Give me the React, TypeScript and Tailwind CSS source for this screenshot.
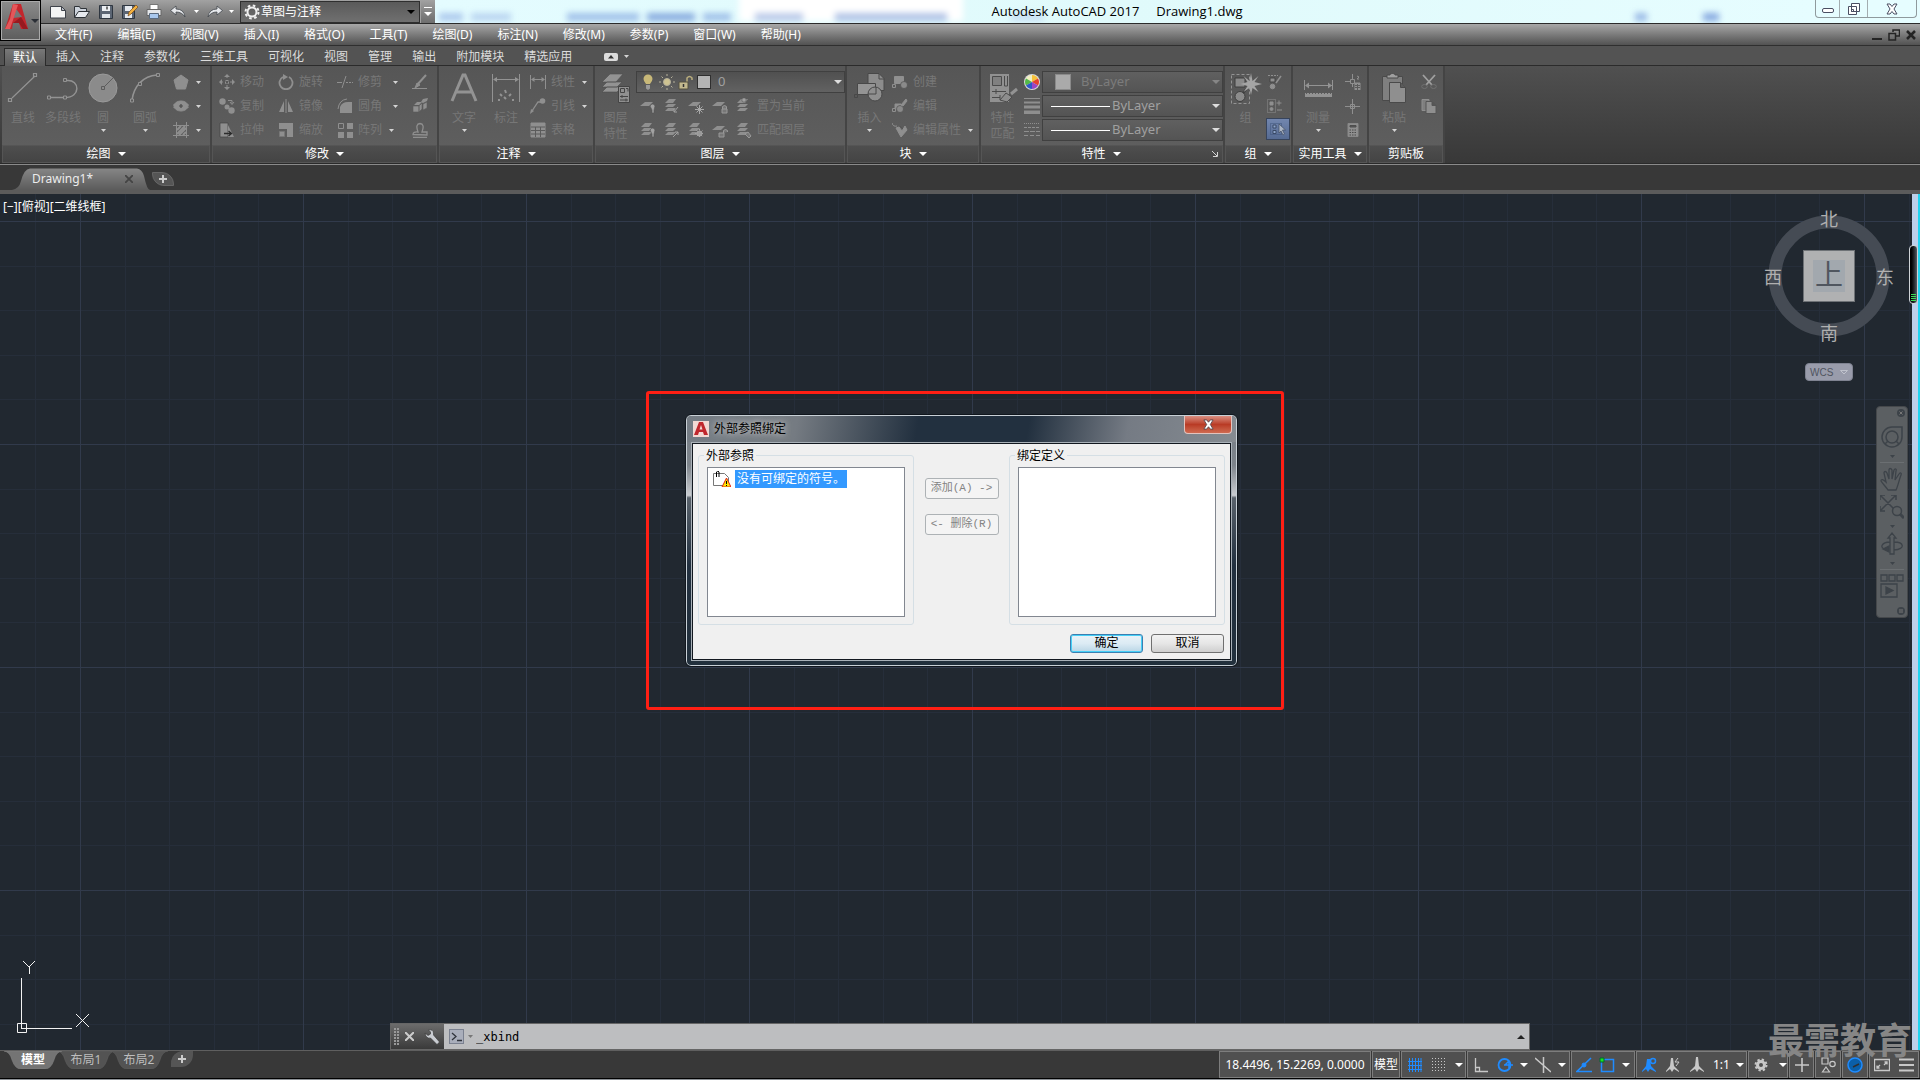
import type { ReactNode } from 'react';
import { clsx } from 'clsx';

const MENUS = ['文件(F)', '编辑(E)', '视图(V)', '插入(I)', '格式(O)', '工具(T)', '绘图(D)', '标注(N)', '修改(M)', '参数(P)', '窗口(W)', '帮助(H)'];
const TABS = ['插入', '注释', '参数化', '三维工具', '可视化', '视图', '管理', '输出', '附加模块', '精选应用'];

const Caret = ({ className = 'text-neutral-300' }: { className?: string }) => (
  <svg viewBox="0 0 5 3" className={clsx('h-[3px] w-[5px] shrink-0', className)} fill="currentColor">
    <path d="M0 0h5L2.5 3z" />
  </svg>
);

const BigCaret = ({ className = 'text-white' }: { className?: string }) => (
  <svg viewBox="0 0 8 4" className={clsx('h-1 w-2 shrink-0', className)} fill="currentColor">
    <path d="M0 0h8L4 4z" />
  </svg>
);

const Ic = ({ children, size = 16 }: { children: ReactNode; size?: 16 | 32 }) => (
  <svg
    viewBox={size === 16 ? '0 0 16 16' : '0 0 32 32'}
    className={clsx('shrink-0', size === 16 ? 'size-4' : 'size-8')}
    fill="none"
    stroke="currentColor"
    strokeWidth="1"
  >
    {children}
  </svg>
);

/* ---------- ribbon icons, 32px ---------- */
const LineIcon = () => (
  <Ic size={32}>
    <path d="M5 26 28 4M1.500 26.500h3v3h-3zM26.500 1.500h3v3h-3z" strokeWidth="1.200" />
  </Ic>
);
const PolylineIcon = () => (
  <Ic size={32}>
    <path d="M4 25.500h14c16 0 15-18 2-17" strokeWidth="1.500" />
    <path d="M.5 24h3v3h-3zM16.500 24h3v3h-3zM16.500 6.500h3v3h-3z" fill="#5b5b5b" />
  </Ic>
);
const CircleIcon = () => (
  <Ic size={32}>
    <circle cx="16" cy="16" r="14" fill="#8b8b8b" stroke="#9a9a9a" />
    <path d="m17 15 9-9" stroke="#5c5c5c" />
    <path d="M14.500 14.500h3v3h-3z" fill="#8b8b8b" stroke="#5c5c5c" />
  </Ic>
);
const ArcIcon = () => (
  <Ic size={32}>
    <path d="M3 28C5 14 14 4 28 3" strokeWidth="1.500" />
    <path d="M1.500 27h3v3h-3zM9.500 10.500h3v3h-3zM27.500 1.500h3v3h-3z" fill="#5b5b5b" />
  </Ic>
);
const TextIcon = () => (
  <Ic size={32}>
    <path d="M4 29 15 3h2l11 26M8 20h16" strokeWidth="3" />
  </Ic>
);
const DimIcon = () => (
  <Ic size={32}>
    <path d="M2.500 2v28M29.500 2v28M4 7.500h24" />
    <path d="m3 7.500 4-2.500v5zM29 7.500 25 5v5z" fill="currentColor" stroke="none" />
    <path d="m10 22 2 2m3-6 1 3m5 1-2 2M8 28h2m4-3 2 2m6 1h2" strokeWidth="2" />
  </Ic>
);
const Sheets = () => (
  <g fill="currentColor" stroke="none">
    <path d="m1 13 3-3h8l-3 3zM1 9l3-3h8L9 9zM1 5l4-4h7L9 5z" />
  </g>
);
const LayerPropsIcon = () => (
  <Ic size={32}>
    <g fill="currentColor" stroke="#4d4d4d" strokeWidth=".6">
      <path d="m2 20 5-5h15l-5 5zM2 15l5-5h15l-5 5zM2 10l8-8h13l-7 8z" />
    </g>
    <path d="M18.500 14.500h11v16h-11z" fill="#909090" stroke="#444" />
    <path d="M20.500 16.500h4v4h-4zM26 16.500h2v3M20 24.500h8M20 28h8M22 23v3M26 26.500v3" stroke="#444" />
  </Ic>
);
const InsertIcon = () => (
  <Ic size={32}>
    <path d="M14 1.500h11l5 5v12H14z" fill="#8c8c8c" stroke="#484848" />
    <path d="M3.500 11.500h18v11h-18z" fill="#949494" stroke="#484848" />
    <circle cx="21" cy="22" r="7" fill="#8f8f8f" stroke="#484848" />
    <path d="M14 22h8v-7M.5 22.500h3v3h-3zM25 2v5h5" stroke="#484848" />
  </Ic>
);
const MatchIcon = () => (
  <Ic size={32}>
    <path d="M3 2h19v28H3z" fill="#919191" stroke="none" />
    <path d="M5.500 4.500h9v9h-9z" stroke="#4b4b4b" fill="#808080" />
    <path d="M17.500 4v10h3V4M5 19.500h14M5 25.500h8M9 17v5M13 23v5" stroke="#4b4b4b" />
    <path d="m13 28 6-7 6 4-5 5z" fill="#8d8d8d" stroke="#4b4b4b" />
    <path d="m24 22 6-5" strokeWidth="3" />
  </Ic>
);
const GroupIcon = () => (
  <Ic size={32}>
    <path d="M1.500 2.500h18v29h-18z" strokeDasharray="3 2" />
    <path d="M5 6h10v9H5z" fill="#8b8b8b" stroke="#3f3f3f" />
    <circle cx="10" cy="24.500" r="5" fill="#8b8b8b" stroke="#3f3f3f" />
    <path d="m13 21 6-7" strokeWidth="2" stroke="#3f3f3f" />
    <path d="m21 1 1.500 8 6-5-4 6 7.500 2-7.500 2 4 6-6-4-1.500 7-1.500-7-6 4 4-6-7-2 7-2-4-6 6 5z" fill="#a5a5a5" stroke="none" />
  </Ic>
);
const MeasureIcon = () => (
  <Ic size={32}>
    <path d="M2.500 8v10M30.500 8v10M4 13.500h26" />
    <path d="m3 13.500 4-3v6zM30 13.500l-4-3v6z" fill="currentColor" stroke="none" />
    <path d="M3 21h27v4H3z" fill="currentColor" stroke="none" />
    <path d="M4 21.500h25" stroke="#5b5b5b" strokeDasharray="1 2" />
  </Ic>
);
const PasteIcon = () => (
  <Ic size={32}>
    <path d="M4.500 4.500h20v24h-20z" fill="#7f7f7f" stroke="#4a4a4a" />
    <path d="M9 6V3h3c0-2 5-2 5 0h3v3z" fill="#a0a0a0" stroke="#4a4a4a" />
    <path d="M11.500 10.500h11l5 5v15h-16z" fill="#8f8f8f" stroke="#4a4a4a" />
    <path d="M22.500 10.500v5h5" fill="#5b5b5b" stroke="#4a4a4a" />
  </Ic>
);

/* ---------- ribbon icons, 16px ---------- */
const PolygonIcon = () => <Ic><path d="m8 1 7 5-2.500 9h-9L1 6z" fill="currentColor" /></Ic>;
const EllipseIcon = () => (
  <Ic>
    <ellipse cx="8" cy="8" rx="7" ry="5" fill="currentColor" />
    <path d="M8 6v4M6 8h4" stroke="#4a4a4a" strokeWidth="1.200" />
    <path d="M1 6v4M15 6v4" strokeDasharray="2 1" />
  </Ic>
);
const HatchIcon = () => (
  <Ic>
    <path d="M0 3.500h16M0 13.500h16M3.500 0v16M13.500 0v16" />
    <path d="m4 8 4-4M4 12l8-8M6 13l7-7M10 13l3-3" strokeWidth="2" />
  </Ic>
);
const MoveIcon = () => (
  <Ic>
    <path d="M6.500 6.500h3v3h-3zM8 1v4M8 11v4M1 8h4M11 8h4" strokeDasharray="3 1" />
    <path d="m8 0 3 3H5zM8 16l3-3H5zM0 8l3-3v6zM16 8l-3-3v6z" fill="currentColor" stroke="none" />
  </Ic>
);
const RotateIcon = () => (
  <Ic>
    <path d="M11 3a6.500 6.500 0 1 1-6 0" strokeWidth="1.800" />
    <path d="m5 0 5 3-5 3z" fill="currentColor" stroke="none" />
  </Ic>
);
const TrimIcon = () => (
  <Ic>
    <path d="m5 14 4-12M0 8.500h5" />
    <path d="M9 8.500h7" strokeDasharray="2 1" />
  </Ic>
);
const EraseIcon = () => <Ic><path d="m5 11 9-10" strokeWidth="2" /><path d="m3 14 2-5 3 2zM0 14.500h15" fill="currentColor" /></Ic>;
const CopyIcon = () => (
  <Ic>
    <circle cx="3.500" cy="3.500" r="3.200" fill="currentColor" stroke="none" />
    <circle cx="8" cy="9" r="2.500" fill="currentColor" stroke="none" />
    <circle cx="12.500" cy="12.500" r="3.200" fill="currentColor" stroke="none" />
    <path d="M9 2.500h4v3M11 4l2 2.500L15 4" />
  </Ic>
);
const MirrorIcon = () => <Ic><path d="M6 3v11H1zM10 3v11h5z" fill="currentColor" stroke="none" /><path d="M8 1v14" /></Ic>;
const FilletIcon = () => <Ic><path d="M3 15V9q2-5 8-5h4v11z" fill="currentColor" stroke="none" /><path d="M1 11Q2 2 10 1" /></Ic>;
const ExplodeIcon = () => (
  <Ic>
    <path d="M1 8h6v6H1zM7 8l3-3v6l-3 3zM11 6l4-2v6l-4 2z" fill="currentColor" stroke="#5b5b5b" strokeWidth=".6" />
    <path d="m2 7 3-3h5L7 7zM9 4l2-3 5-1-1 3-4 2z" fill="currentColor" stroke="none" />
  </Ic>
);
const StretchIcon = () => (
  <Ic>
    <path d="M1 1h8v14H1z" fill="currentColor" stroke="#444" strokeWidth=".7" />
    <path d="m9 3 6 12H9z" fill="currentColor" stroke="none" />
    <path d="M5 11.500h7M9.500 9l3 2.500-3 2.500" stroke="#2c2c2c" strokeWidth="1.300" />
  </Ic>
);
const ScaleIcon = () => <Ic><path d="M1 1h14v14H9V7H1z" fill="currentColor" stroke="none" /><path d="M1.500 9.500h5v5h-5z" fill="currentColor" stroke="#777" /></Ic>;
const ArrayIcon = () => (
  <Ic>
    <path d="M1.500 1.500h5v5h-5z" />
    <path d="M10 1h6v6h-6zM1 10h6v6H1zM10 10h6v6h-6z" fill="currentColor" stroke="none" />
  </Ic>
);
const OffsetIcon = () => <Ic><path d="M1 15.500h14M1 12.500q0-3 5-2.500-3-8 2-8.500 5 .5 2 8.500h5v3z" strokeWidth="1.300" /></Ic>;
const LinearIcon = () => <Ic><path d="M.5 1v14M15.500 1v14M2 5.500h12" /><path d="m1 5.500 3.500-2.500v5zM15 5.500 11.500 3v5z" fill="currentColor" stroke="none" /></Ic>;
const LeaderIcon = () => <Ic><circle cx="12.500" cy="3" r="2.800" fill="currentColor" stroke="none" /><path d="M11 4H8l-6 9" strokeWidth="1.300" /><path d="m0 16 1-5 3 2z" fill="currentColor" stroke="none" /></Ic>;
const TableIcon = () => <Ic><path d="M1 1h14v14H1z" fill="currentColor" /><path d="M1 5h14M1 8.500h14M1 12h14M5.500 5v10M10.500 5v10" stroke="#5b5b5b" /></Ic>;

const LayerIcon = ({ kind }: { kind: string }) => (
  <Ic>
    {kind.startsWith('one') ? <path d="m0 8 5-4h8l-4 4z" fill="currentColor" stroke="none" /> : <Sheets />}
    {kind.endsWith('bulb') && <path d="M10 8q3-4 5 0l-1 4v3h-2v-3z" fill="#a2a2a2" stroke="#555" strokeWidth=".6" />}
    {kind.endsWith('arrow') && <path d="m14 9-4 5m0-3v3h3" stroke="#a2a2a2" />}
    {kind.endsWith('out') && <path d="m9 15 5-5m-3 0h3v3" stroke="#a2a2a2" />}
    {kind.endsWith('snow') && <path d="M11.500 7v9M7 11.500h9M8.500 8.500l6 6M14.500 8.500l-6 6" stroke="#a8a8a8" />}
    {kind.endsWith('sun') && (
      <g stroke="#a2a2a2">
        <circle cx="11.500" cy="11.500" r="2.500" fill="#999" />
        <path d="M11.500 7v9M7 11.500h9M8.500 8.500l6 6M14.500 8.500l-6 6" strokeDasharray="1.500 5" />
      </g>
    )}
    {kind.endsWith('lock') && <path d="M10 11h5v4h-5zM10.500 11V8.500q2-2 4 0V11" fill="#777" stroke="#999" />}
    {kind.endsWith('open') && <path d="M7 11h5v4H7zM11.500 11V8.500q2-2 4 0V10" fill="#777" stroke="#999" />}
    {kind.endsWith('dot') && <circle cx="8" cy="2" r="2.200" fill="#a0a0a0" stroke="#555" strokeWidth=".6" />}
    {kind.endsWith('brush') && <path d="m9 12 3-2 3 4-2 2z" fill="#777" stroke="#999" />}
  </Ic>
);
const BlockIcon = ({ kind }: { kind: 'new' | 'edit' }) => (
  <Ic>
    <path d={kind === 'new' ? 'M2.500 2.500h9v7h-9z' : 'M3 6h6v5H3z'} fill="#909090" />
    <circle cx={kind === 'new' ? 12 : 8} cy="11" r="3.500" fill="#8a8a8a" stroke="#505050" strokeWidth=".7" />
    <path d="M.5 10.500h3v3h-3z" fill="#5b5b5b" />
    {kind === 'edit' && <path d="m9 7 5-6 1 2-4 5z" fill="currentColor" />}
  </Ic>
);
const AttrIcon = () => (
  <Ic>
    <path d="M0 1q1 4 5 3" />
    <path d="M4 6l5 9 6-7-2-4-3 5-3-4z" fill="currentColor" />
    <path d="M8 4l3 3" stroke="#555" />
  </Ic>
);
const WheelIcon = () => (
  <Ic>
    <g stroke="none">
      <circle cx="8" cy="8" r="8" fill="#d9d9d9" />
      <path d="M8 8V1a7 7 0 0 0-6 3.500z" fill="#f2f0c0" />
      <path d="M8 8V1a7 7 0 0 1 6 3.500z" fill="#f6c23a" />
      <path d="m8 8 6-3.500a7 7 0 0 1 0 7z" fill="#e8402e" />
      <path d="M8 8 2 4.500a7 7 0 0 0 0 7z" fill="#54b948" />
      <path d="m8 8-6 3.500A7 7 0 0 0 8 15z" fill="#2f58c9" />
      <path d="m8 8 6 3.500A7 7 0 0 1 8 15z" fill="#9b45c4" />
    </g>
  </Ic>
);
const WeightIcon = () => <Ic><path d="M0 .5h16" /><path d="M0 4.500h16" strokeWidth="2" /><path d="M0 9h16" strokeWidth="3" /><path d="M0 14.500h16" strokeWidth="4" /></Ic>;
const LtypeIcon = () => <Ic><path d="M0 1.500h16" strokeDasharray="1 1" /><path d="M0 5.500h16" strokeDasharray="3 1" /><path d="M0 9.500h16" strokeDasharray="5 1" /><path d="M0 13.500h16" strokeDasharray="4 2" /></Ic>;
const UngroupIcon = () => <Ic><path d="M2 1.500h10" strokeDasharray="2 1" /><path d="M4 4h5v4H4z" fill="currentColor" stroke="#444" /><circle cx="6.500" cy="12.500" r="2.300" fill="currentColor" /><path d="m15 2-5 7" strokeWidth="1.500" /></Ic>;
const GroupEditIcon = () => <Ic><path d="M1.500 1.500h8v13h-8z" strokeDasharray="1 1" /><path d="M4 4h3v3H4z" fill="currentColor" /><circle cx="5.500" cy="11" r="1.500" fill="currentColor" /><path d="M10.500 5h5M13 2.500v5M11 12h5" /></Ic>;
const GroupSelIcon = () => <Ic><path d="M.5 2.500h11v11H.500z" strokeDasharray="1 1" stroke="#3f557a" /><path d="M3 4h3v3H3zM3 9.500h3v3H3z" fill="#8ea6cc" stroke="#3b4a66" /><path d="M9 3v9l2-2 2 4 1.500-1-2-4h3z" fill="#aab4c4" stroke="#444f63" strokeWidth=".7" /></Ic>;
const PointPickIcon = () => <Ic><path d="M0 7.500h5M7.500 0v5M7.500 10v3M5.500 5.500h4v4h-4z" /><path d="M10 9h5v7h-5z" fill="currentColor" /><path d="M10 11.500h5M10 13.500h5M12.500 10v6" stroke="#5b5b5b" /><path d="m12 2 2 1-2 2h2" /></Ic>;
const PointIcon = () => <Ic><path d="M0 8.500h15M7.500 1v15M5.500 6.500h4v4h-4z" /></Ic>;
const CalcIcon = () => <Ic><path d="M3 1.500h10v13H3z" fill="currentColor" stroke="#888" /><path d="M5 3.500h6v1.500H5z" fill="#5b5b5b" stroke="#4d4d4d" /><path d="M4.500 8h7M4.500 10.500h7M4.500 13h7" stroke="#4a4a4a" strokeDasharray="1.500 1" /></Ic>;
const CutIcon = () => <Ic><path d="M2 1 11 11M14 1 5 11" stroke="#a0a0a0" strokeWidth="1.800" /><ellipse cx="3.500" cy="12.500" rx="2.800" ry="2" stroke="#707070" /><ellipse cx="12.500" cy="12.500" rx="2.800" ry="2" stroke="#707070" /></Ic>;
const CopyDocIcon = () => <Ic><path d="M1 1.500h7v11H1z" fill="#7f7f7f" /><path d="M5 3.500h6l4 4v8H5z" fill="#8f8f8f" stroke="#555" /><path d="M11 3.500v4h4z" fill="#555" stroke="#555" /></Ic>;

/* ---------- ribbon parts ---------- */
const BigButton = ({ icon, label, label2, caret, className }: { icon: ReactNode; label: string; label2?: string; caret?: boolean; className: string }) => (
  <button className={clsx('flex flex-col items-center text-xs leading-4 text-[#777]', className)}>
    <span className="flex h-10 items-start pt-0.5 text-[#939393]">{icon}</span>
    <span className="whitespace-nowrap">{label}</span>
    {label2 && <span className="whitespace-nowrap">{label2}</span>}
    {caret && <span className="pt-[3px]"><Caret /></span>}
  </button>
);

const SmallButton = ({ icon, label, caret, wide }: { icon: ReactNode; label?: string; caret?: boolean; wide?: boolean }) => (
  <button className="flex h-6 items-center gap-[5px] text-xs text-[#777]">
    <span className="text-[#8f8f8f]">{icon}</span>
    {label && <span className="whitespace-nowrap">{label}</span>}
    {caret && <span className={wide ? 'pl-1.5' : 'pl-0.5'}><Caret /></span>}
  </button>
);

const Column = ({ children, className }: { children: ReactNode; className?: string }) => (
  <div className={clsx('flex flex-col items-start', className)}>{children}</div>
);

const Panel = ({ title, width, caret = true, launcher, children }: { title: string; width: string; caret?: boolean; launcher?: boolean; children: ReactNode }) => (
  <section className={clsx('flex shrink-0 flex-col border-r-2 border-[#444]', width)}>
    <div className="flex h-[79px] bg-linear-to-b from-[#565656] to-[#5e5e5e] pt-1">{children}</div>
    <button className="flex h-[18px] items-center justify-center gap-[7px] border border-[#555] bg-linear-to-b from-[#4e4e4e] to-[#444] text-xs text-white">
      {launcher && <span className="w-2" />}
      <span className={clsx(launcher && 'ml-auto')}>{title}</span>
      {caret && <BigCaret />}
      {launcher && (
        <svg viewBox="0 0 6 6" className="mr-1 ml-auto size-1.5 text-neutral-300" fill="none" stroke="currentColor">
          <path d="m0 0 5 5M5.500 1v4.500H1" />
        </svg>
      )}
    </button>
  </section>
);

const PropCombo = ({ label, disabled, children }: { label: string; disabled?: boolean; children: ReactNode }) => (
  <div className="relative flex h-[22px] items-center border border-[#404040] bg-linear-to-b from-[#606060] to-[#545454]">
    <span className="pointer-events-none absolute left-2 text-white">{children}</span>
    <select
      aria-label={label}
      disabled={disabled}
      className={clsx('h-full w-full appearance-none text-[13px] opacity-100 outline-none', disabled ? 'pl-[38px] text-[#7c7c7c]' : 'pl-[69px] text-[#a0a0a0]')}
    >
      <option>ByLayer</option>
    </select>
    <BigCaret className={clsx('pointer-events-none absolute right-0.5', disabled ? 'text-[#868686]' : 'text-[#ddd]')} />
  </div>
);

const Ribbon = () => (
  <div className="flex h-[98px] border-b border-[#2a2a2a] bg-linear-to-b from-[#505050] to-[#383838] pl-0.5">
    <Panel title="绘图" width="w-[210px]">
      <BigButton className="w-[42px]" icon={<LineIcon />} label="直线" />
      <BigButton className="w-[38px]" icon={<PolylineIcon />} label="多段线" />
      <BigButton className="w-[42px]" icon={<CircleIcon />} label="圆" caret />
      <BigButton className="w-[42px]" icon={<ArcIcon />} label="圆弧" caret />
      <Column className="pl-[7px]">
        <SmallButton icon={<PolygonIcon />} caret />
        <SmallButton icon={<EllipseIcon />} caret />
        <SmallButton icon={<HatchIcon />} caret />
      </Column>
    </Panel>
    <Panel title="修改" width="w-[227px]">
      <Column className="w-[66px] pl-[7px]">
        <SmallButton icon={<MoveIcon />} label="移动" />
        <SmallButton icon={<CopyIcon />} label="复制" />
        <SmallButton icon={<StretchIcon />} label="拉伸" />
      </Column>
      <Column className="w-[59px]">
        <SmallButton icon={<RotateIcon />} label="旋转" />
        <SmallButton icon={<MirrorIcon />} label="镜像" />
        <SmallButton icon={<ScaleIcon />} label="缩放" />
      </Column>
      <Column className="w-[75px]">
        <SmallButton icon={<TrimIcon />} label="修剪" caret wide />
        <SmallButton icon={<FilletIcon />} label="圆角" caret wide />
        <SmallButton icon={<ArrayIcon />} label="阵列" caret />
      </Column>
      <Column>
        <SmallButton icon={<EraseIcon />} />
        <SmallButton icon={<ExplodeIcon />} />
        <SmallButton icon={<OffsetIcon />} />
      </Column>
    </Panel>
    <Panel title="注释" width="w-[156px]">
      <BigButton className="ml-1 w-[42px]" icon={<TextIcon />} label="文字" caret />
      <BigButton className="w-[42px]" icon={<DimIcon />} label="标注" />
      <Column className="pl-[3px]">
        <SmallButton icon={<LinearIcon />} label="线性" caret />
        <SmallButton icon={<LeaderIcon />} label="引线" caret />
        <SmallButton icon={<TableIcon />} label="表格" />
      </Column>
    </Panel>
    <Panel title="图层" width="w-[252px]">
      <BigButton className="w-[41px]" icon={<LayerPropsIcon />} label="图层" label2="特性" />
      <div className="flex flex-1 flex-col">
        <div className="relative mt-px flex h-[22px] items-center border border-[#404040] bg-linear-to-b from-[#505050] to-[#626262]">
          <span className="pointer-events-none absolute left-[3px] flex items-center gap-[3px]">
            <svg viewBox="0 0 16 16" className="size-4">
              <path d="M3.500 5a4.500 4.500 0 0 1 9 0q0 2-2.500 5H6Q3.500 7 3.500 5z" fill="#c8b878" />
              <path d="M6 11h4v3.500L8 16l-2-1.500z" fill="#9a9a9a" />
            </svg>
            <svg viewBox="0 0 16 16" className="size-4" stroke="#b5b09a" fill="#cfc391">
              <circle cx="8" cy="8" r="3.500" />
              <path d="M8 0v2M8 14v2M0 8h2M14 8h2M2.500 2.500l1.500 1.500M12 12l1.500 1.500M13.500 2.500 12 4M4 12l-1.500 1.500" />
            </svg>
            <svg viewBox="0 0 16 16" className="size-4" fill="none" stroke="#b9ad7d" strokeWidth="1.500">
              <path d="M9 8V4q2.500-3 5 0v2" />
              <path d="M1 8h9v7H1z" fill="#c3b98e" stroke="#55513f" strokeWidth="1" />
              <path d="M5.500 10v3" stroke="#333" />
            </svg>
            <span className="size-[14px] border border-[#2f2f2f] bg-[#b4b4b4]" />
          </span>
          <select aria-label="图层" className="h-full w-full appearance-none pl-[81px] text-[13px] text-[#a0a0a0] outline-none">
            <option>0</option>
          </select>
          <BigCaret className="pointer-events-none absolute right-0.5 text-[#ddd]" />
        </div>
        <div className="mt-px flex h-6 items-center gap-2 pl-1 text-[#8f8f8f]">
          <LayerIcon kind="one-bulb" />
          <LayerIcon kind="arrow" />
          <LayerIcon kind="one-snow" />
          <LayerIcon kind="one-lock" />
          <SmallButton icon={<LayerIcon kind="dot" />} label="置为当前" />
        </div>
        <div className="flex h-6 items-center gap-2 pl-1 text-[#8f8f8f]">
          <LayerIcon kind="bulb" />
          <LayerIcon kind="out" />
          <LayerIcon kind="sun" />
          <LayerIcon kind="one-open" />
          <SmallButton icon={<LayerIcon kind="brush" />} label="匹配图层" />
        </div>
      </div>
    </Panel>
    <Panel title="块" width="w-[134px]">
      <BigButton className="w-[45px]" icon={<InsertIcon />} label="插入" caret />
      <Column>
        <SmallButton icon={<BlockIcon kind="new" />} label="创建" />
        <SmallButton icon={<BlockIcon kind="edit" />} label="编辑" />
        <SmallButton icon={<AttrIcon />} label="编辑属性" caret />
      </Column>
    </Panel>
    <Panel title="特性" width="w-[244px]" launcher>
      <BigButton className="w-[43px]" icon={<MatchIcon />} label="特性" label2="匹配" />
      <Column className="w-[18px] text-[#9a9a9a]">
        <SmallButton icon={<WheelIcon />} />
        <SmallButton icon={<WeightIcon />} />
        <SmallButton icon={<LtypeIcon />} />
      </Column>
      <div className="flex flex-1 flex-col gap-0.5 pt-px">
        <PropCombo label="对象颜色" disabled>
          <span className="ml-1 block size-4 border border-[#8a8a8a] bg-[#aaa]" />
        </PropCombo>
        <PropCombo label="线宽">
          <span className="block h-px w-[59px] bg-white" />
        </PropCombo>
        <PropCombo label="线型">
          <span className="block h-px w-[59px] bg-white" />
        </PropCombo>
      </div>
    </Panel>
    <Panel title="组" width="w-[68px]">
      <BigButton className="w-[41px]" icon={<GroupIcon />} label="组" />
      <Column className="items-center">
        <SmallButton icon={<UngroupIcon />} />
        <SmallButton icon={<GroupEditIcon />} />
        <button aria-label="启用组选择" className="flex h-[22px] w-6 items-center justify-center border border-[#37445c] bg-linear-to-b from-[#7286ae] to-[#566b93]">
          <GroupSelIcon />
        </button>
      </Column>
    </Panel>
    <Panel title="实用工具" width="w-[76px]">
      <BigButton className="w-[50px]" icon={<MeasureIcon />} label="测量" caret />
      <Column className="pl-0.5">
        <SmallButton icon={<PointPickIcon />} />
        <SmallButton icon={<PointIcon />} />
        <SmallButton icon={<CalcIcon />} />
      </Column>
    </Panel>
    <Panel title="剪贴板" width="w-[76px]" caret={false}>
      <BigButton className="w-[50px]" icon={<PasteIcon />} label="粘贴" caret />
      <Column className="pl-0.5">
        <SmallButton icon={<CutIcon />} />
        <SmallButton icon={<CopyDocIcon />} />
      </Column>
    </Panel>
  </div>
);

/* ---------- window header ---------- */
const QuickAccess = () => (
  <div className="flex h-full w-[435px] shrink-0 items-center bg-linear-to-b from-[#a2a2a2] via-[#858585] to-[#6e6e6e] pl-[50px]">
    <div className="flex items-center gap-2">
      <svg viewBox="0 0 16 16" className="size-4"><path d="M.5 2.500h11l4 4v7.500H.500z" fill="#f4f4f4" stroke="#3f434a" /><path d="M11.500 2.500v4h4z" fill="#b9bec8" stroke="#3f434a" /></svg>
      <svg viewBox="0 0 16 16" className="size-4"><path d="M.5 13.500v-11h5l1 2h6v3" fill="#cdd3dc" stroke="#2f3338" /><path d="m.5 13.500 4-6h11l-4 6z" fill="#e7eaef" stroke="#2f3338" /></svg>
      <svg viewBox="0 0 16 16" className="size-4"><path d="M1.500 1.500h13v13h-13z" fill="#5b6573" stroke="#2e3640" /><path d="M4 2h8v5H4z" fill="#eceff3" /><path d="M4 10h8v4H4z" fill="#dfe4ea" /><path d="M9 2.500v3" stroke="#444" strokeWidth="1.500" /></svg>
      <svg viewBox="0 0 16 16" className="size-4"><path d="M.5 1.500h12v13H.500z" fill="#5b6573" stroke="#2e3640" /><path d="M3 2h7v5H3zM3 10h7v4H3z" fill="#e6eaef" /><path d="m6 12 1-4 7-7 2 2-7 7z" fill="#f3b13f" stroke="#7a4a1a" strokeWidth=".7" /></svg>
      <svg viewBox="0 0 16 16" className="size-4"><path d="M4 5V.500h8V5" fill="#fff" stroke="#777" /><path d="M1 5.500h14v6H1z" fill="#e5e7ea" stroke="#666" /><path d="M3.500 9.500h9v5h-9z" fill="#a9c8ee" stroke="#5b6b80" /></svg>
      <svg viewBox="0 0 16 16" className="size-4"><path d="M6 2v3q8 0 9 8-3-5-9-5v3L.500 6.500z" fill="#e6e8eb" stroke="#41464c" strokeWidth=".8" /></svg>
    </div>
    <Caret className="mx-2 text-white" />
    <svg viewBox="0 0 16 16" className="size-4 shrink-0"><path d="M10 2v3q-8 0-9 8 3-5 9-5v3l5.500-4.500z" fill="#e6e8eb" stroke="#41464c" strokeWidth=".8" /></svg>
    <Caret className="mx-[6px] text-white" />
    <div className="relative flex h-[22px] w-[180px] shrink-0 items-center border border-[#2f2f2f] bg-linear-to-b from-[#5a5a5a] to-[#707070]">
      <svg viewBox="0 0 16 16" className="pointer-events-none absolute left-[3px] size-4" fill="none" stroke="#f0f0f0">
        <circle cx="8" cy="8" r="4.500" strokeWidth="2" />
        <circle cx="8" cy="8" r="6.500" strokeWidth="2" strokeDasharray="2.600 2.505" />
      </svg>
      <select aria-label="工作空间" className="h-full w-full appearance-none pl-5 text-xs text-white outline-none">
        <option>草图与注释</option>
      </select>
      <BigCaret className="pointer-events-none absolute right-1" />
    </div>
    <button aria-label="自定义快速访问工具栏" className="flex h-full flex-1 flex-col items-center justify-center gap-1 border-l border-neutral-400">
      <span className="h-px w-2 bg-white" />
      <BigCaret />
    </button>
  </div>
);

const TitleBar = () => (
  <div className="flex h-6 border-b border-[#2b2b2b]">
    <QuickAccess />
    <div className="relative flex flex-1 items-center justify-center overflow-hidden bg-linear-to-r from-[#e4fcff] via-[#e0fafb] to-[#e6fdff]">
      {/* desktop content seen through the glass frame */}
      <div className="absolute inset-0 flex items-end gap-2 pb-0.5 pl-1 blur-[3px]">
        <span className="h-2 w-6 bg-[#9fbde8]/80" />
        <span className="mr-12 h-2 w-10 bg-[#9fbde8]/60" />
        <span className="h-2 w-18 bg-[#8fb2e4]/80" />
        <span className="h-2 w-12 bg-[#7ea3dc]/90" />
        <span className="h-2 w-7 bg-[#8fb2e4]/80" />
        <span className="flex h-10 w-56 shrink-0 items-end justify-around bg-white">
          <span className="h-2 w-12 bg-[#9fb4e0]/70" />
          <span className="h-2 w-28 bg-[#9fb4e0]/80" />
        </span>
        <span className="ml-10 h-2 w-8 bg-[#b7cdf0]/60" />
        <span className="mr-12 ml-auto h-2 w-3 bg-[#86a8e0]/80" />
        <span className="mr-24 h-2 w-4 bg-[#86a8e0]" />
      </div>
      <span className="relative pr-4 font-['Open_Sans',sans-serif] text-[13px] whitespace-pre text-black">{'Autodesk AutoCAD 2017     Drawing1.dwg'}</span>
    </div>
    <div className="w-[105px] bg-[#e6fdff]">
      <div className="flex h-[18px] w-[102px] rounded-b border border-t-0 border-[#8f9a9d] text-[#4a4f63]">
        <button aria-label="最小化" className="flex flex-1 items-end justify-center border-r border-[#a3adb0] pb-1">
          <span className="h-[5px] w-3 rounded-xs border border-current bg-white" />
        </button>
        <button aria-label="还原" className="flex w-7 items-center justify-center border-r border-[#a3adb0]">
          <svg viewBox="0 0 12 12" className="size-3" fill="#fff" stroke="currentColor"><path d="M3.500.5h8v8h-8zM.5 3.500h8v8h-8zM3.500 6.500h2v2h-2z" /></svg>
        </button>
        <button aria-label="关闭" className="flex w-12 items-center justify-center">
          <svg viewBox="0 0 12 12" className="size-3" strokeLinejoin="round"><path d="M1 1h3l2 2.500L8 1h3L8 6l3 5H8L6 8.500 4 11H1l3-5z" fill="#fff" stroke="currentColor" /></svg>
        </button>
      </div>
    </div>
  </div>
);

const MenuBar = () => (
  <div className="flex h-[22px] items-center justify-between border-b border-[#2f2f2f] bg-linear-to-b from-[#a8a8a8] to-[#525252] pr-1 pl-[55px]">
    <nav className="flex gap-[25px] text-xs text-white">
      {MENUS.map((m) => <button key={m} className="whitespace-nowrap">{m}</button>)}
    </nav>
    <div className="flex items-center gap-1.5 text-[#242424]">
      <button aria-label="最小化图形" className="flex h-2.5 items-end"><span className="h-0.5 w-2.5 bg-current" /></button>
      <button aria-label="还原图形"><svg viewBox="0 0 12 12" className="size-3" fill="none" stroke="currentColor" strokeWidth="1.500"><path d="M5 3V1h6.500v6H8M1 4.500h6.500V11H1z" /></svg></button>
      <button aria-label="关闭图形"><svg viewBox="0 0 10 10" className="size-2.5" stroke="currentColor" strokeWidth="2.500"><path d="m1 1 8 8M9 1 1 9" /></svg></button>
    </div>
  </div>
);

const RibbonTabs = () => (
  <div className="flex h-5 items-center border-b border-[#2b2b2b] bg-[#535353] pt-0.5 pl-1 text-xs text-[#dcdcdc]">
    <button className="-mb-px h-[18px] self-end border border-b-0 border-[#2b2b2b] bg-linear-to-b from-[#787878] to-[#5c5c5c] px-2 text-white">默认</button>
    {TABS.map((t) => <button key={t} className="px-2.5 whitespace-nowrap">{t}</button>)}
    <button aria-label="最小化功能区" className="ml-[22px] flex items-center gap-1.5">
      <svg viewBox="0 0 14 8" className="h-2 w-3.5"><rect width="14" height="8" rx="2" fill="#dcdcdc" /><path d="M7 2 10 5.500H4z" fill="#333" /></svg>
      <Caret />
    </button>
  </div>
);

const FileTabs = () => (
  <div className="flex h-[30px] items-end border-t border-[#8a8a8a] border-b-4 border-b-[#5b5b5b] bg-[#383838] pl-3">
    <div className="relative flex h-[22px] w-[138px] items-center justify-between pr-[17px] pl-5">
      <svg viewBox="0 0 138 22" preserveAspectRatio="none" className="absolute inset-0 h-full w-full">
        <defs>
          <linearGradient id="ftab" x1="0" y1="0" x2="0" y2="1"><stop offset="0" stopColor="#868686" /><stop offset="1" stopColor="#5b5b5b" /></linearGradient>
        </defs>
        <path d="M0 22Q7 21 9 13 12 1 18 .5H125Q130 1 132 8 135 22 138 22Z" fill="url(#ftab)" />
      </svg>
      <span className="relative text-xs text-[#ececec]">Drawing1*</span>
      <button aria-label="关闭标签" className="relative"><svg viewBox="0 0 8 8" className="size-2" stroke="#444" strokeWidth="1.800"><path d="m0 0 8 8M8 0 0 8" /></svg></button>
    </div>
    <button aria-label="新图形" className="mb-1 ml-0.5 flex h-3.5 w-[22px] items-center justify-center rounded-tr-xl rounded-bl-xl border border-[#666] bg-[#555]">
      <svg viewBox="0 0 8 8" className="size-2" stroke="#ccc" strokeWidth="2"><path d="M0 4h8M4 0v8" /></svg>
    </button>
  </div>
);

/* ---------- drawing area ---------- */
const Grid = () => (
  <svg className="absolute inset-0 h-full w-full" fill="none">
    <defs>
      <pattern id="grid" x="80" y="27" width="223" height="223" patternUnits="userSpaceOnUse">
        <path d="M45.500 0v223M89.500 0v223M134.500 0v223M178.500 0v223M0 45.500h223M0 89.500h223M0 134.500h223M0 178.500h223" stroke="#262e3a" />
        <path d="M.5 0v223M0 .5h223" stroke="#313a4b" />
      </pattern>
    </defs>
    <rect width="100%" height="100%" fill="url(#grid)" />
  </svg>
);

const ViewCube = () => (
  <div className="absolute top-[11px] right-[18px] flex flex-col items-center gap-5">
    <div className="relative grid h-[138px] w-[130px] grid-cols-3 grid-rows-3 place-items-center font-['Liberation_Serif','Noto_Sans_CJK_SC',serif] text-[18px] leading-none text-[#b0b0b0]">
      <svg viewBox="0 0 130 138" className="absolute inset-0 size-full" fill="none"><circle cx="65" cy="71" r="54" stroke="#454b54" strokeWidth="13" /></svg>
      <span className="relative col-start-2 row-start-1 self-start pt-1.5">北</span>
      <span className="relative col-start-1 row-start-2 justify-self-start pt-2">西</span>
      <span className="relative col-start-2 row-start-2 mt-1 grid size-[52px] place-items-center border border-[#6e7276] bg-[#b0b1b2]">
        <span className="grid size-8 place-items-center bg-[#a2a8ae] text-[28px] leading-none text-[#50565f]">上</span>
      </span>
      <span className="relative col-start-3 row-start-2 justify-self-end pt-2">东</span>
      <span className="relative col-start-2 row-start-3 self-end">南</span>
    </div>
    <button className="flex h-[18px] w-12 items-center justify-between rounded border border-[#7f8391] bg-[#999cab] px-1 font-['Liberation_Sans',sans-serif] text-[10px] text-[#50545f]">
      WCS
      <svg viewBox="0 0 8 5" className="h-[5px] w-2" fill="none" stroke="#bfc2cc"><path d="M.5.5h7L4 4z" /></svg>
    </button>
  </div>
);

const NavBar = () => (
  <div className="absolute top-[212px] right-1 flex h-[212px] w-8 flex-col items-center rounded border border-[#45484b] bg-[#5b5f62] text-[#3d4349]">
    <svg viewBox="0 0 8 8" className="mt-0.5 mr-0.5 size-2 self-end" fill="currentColor"><circle cx="4" cy="4" r="4" /><path d="m2.500 2.500 3 3m0-3-3 3" stroke="#777" /></svg>
    <svg viewBox="0 0 24 24" className="mt-2 size-6" fill="none" stroke="currentColor" strokeWidth="1.500"><path d="M12 2h10v10a10 10 0 1 1-10-10z" /><circle cx="12" cy="12" r="6" /><path d="m5 19 3-3m8 0 3 3" /></svg>
    <Caret className="mt-1.5 text-current" />
    <span className="mt-1 h-px w-6 bg-[#6b6f72]" />
    <svg viewBox="0 0 24 24" className="mt-1 size-6" fill="none" stroke="currentColor" strokeWidth="1.300"><path d="M8 23c-2-3-5-6-7-9 0-2 2-2 5 1L4 6c0-2 2-2 3 0l2 6V3c0-2 2-2 3 0v9l2-9c1-2 3-1 2 1l-1 9 4-6c1-2 3-1 2 1-2 5-3 11-5 15z" /></svg>
    <svg viewBox="0 0 24 24" className="mt-1 size-6" fill="none" stroke="currentColor" strokeWidth="1.500"><path d="m1 1 15 15M15 1 1 15M0 5V0h5M11 0h5v5M0 11v5h5" /><circle cx="17" cy="16" r="4.500" fill="#5b5f62" /><path d="m20 19 4 4" strokeWidth="3" /></svg>
    <Caret className="mt-1.5 text-current" />
    <svg viewBox="0 0 24 24" className="mt-1 size-6" fill="none" stroke="currentColor" strokeWidth="1.300"><path d="M10 22V6H8l4-5 4 5h-2v16zM10 10c-8 0-12 6-3 8M14 10c10 0 12 7 0 8" /><path d="m3 17 6-3v6z" fill="currentColor" /></svg>
    <Caret className="mt-1.5 text-current" />
    <span className="mt-1 h-px w-6 bg-[#6b6f72]" />
    <svg viewBox="0 0 24 24" className="mt-1 size-6" fill="none" stroke="currentColor" strokeWidth="1.300"><path d="M1 1h6v6H1zM9 1h6v6H9zM17 1h6v6h-6zM1 10h16v13H1z" /><path d="m6 13 7 3.500L6 20z" fill="currentColor" /></svg>
    <svg viewBox="0 0 8 8" className="mt-auto mr-0.5 mb-0.5 size-2 self-end" fill="currentColor"><circle cx="4" cy="4" r="4" /><path d="M2 3h4M2 5h4" stroke="#777" /></svg>
  </div>
);

const UcsIcon = () => (
  <svg viewBox="0 0 76 76" className="absolute bottom-3.5 left-4 size-[76px]" fill="none" stroke="#f2f2f2">
    <path d="M5.500 68V18M5 68.500h51M1.500 63.500h9v9h-9z" />
    <path d="m7 1 6 6 6-6M13.500 7v7M60 54l13 13M73 54 60 67" />
  </svg>
);

const CommandLine = () => (
  <div className="absolute right-[382px] bottom-0 left-[390px] flex h-[27px] border border-[#666]">
    <div className="flex w-[53px] shrink-0 items-center gap-1.5 bg-linear-to-b from-[#6c6c6c] to-[#3a3a3a] pl-[3px]">
      <svg viewBox="0 0 5 18" className="h-[18px] w-[5px]" stroke="#999" strokeWidth="2" strokeDasharray="2 1"><path d="M1 0v18M4 0v18" /></svg>
      <svg viewBox="0 0 9 9" className="size-[9px]" stroke="#ccc" strokeWidth="2"><path d="m0 0 9 9M9 0 0 9" /></svg>
      <svg viewBox="0 0 16 16" className="ml-1 size-4"><path d="M1 4 4 6.500 6.500 5V3L4.500 1Q9 0 9.500 4v2l6 7-2.500 2.500-6.500-6.500Q2 10 1 4z" fill="#c9ccd1" stroke="#333" strokeWidth=".6" /></svg>
    </div>
    <label className="flex flex-1 items-center bg-[#bdbec0] pr-1 pl-[5px]">
      <span className="flex size-[15px] items-center border border-[#7b8190] bg-[#a9aebb]">
        <svg viewBox="0 0 13 13" className="size-[13px]" fill="none" stroke="#30343c"><path d="m2 3 4 3.500L2 10M7 10.500h5" strokeWidth="1.300" /></svg>
      </span>
      <Caret className="mr-[3px] ml-1 text-[#777]" />
      <input
        aria-label="命令"
        defaultValue="_xbind"
        className="flex-1 bg-transparent font-['DejaVu_Sans_Mono',monospace] text-[12px] text-black outline-none"
      />
      <svg viewBox="0 0 8 4" className="h-1 w-2"><path d="M0 4h8L4 0z" fill="#222" /></svg>
    </label>
  </div>
);

/* ---------- dialog ---------- */
const GroupBox = ({ title, children }: { title: string; children?: ReactNode }) => (
  <fieldset className="h-[178px] w-[216px] rounded-[3px] border border-[#d5dfe5] px-2 pb-1.5">
    <legend className="-ml-[3px] px-0.5 text-xs leading-[18px]">{title}</legend>
    <ul className="mt-0.5 h-[150px] w-full border border-[#828790] bg-white p-px text-xs">{children}</ul>
  </fieldset>
);

const XBindDialog = () => (
  <div
    role="dialog"
    aria-label="外部参照绑定"
    className="flex h-[253px] w-[553px] flex-col rounded-md border border-[#10161d] bg-[linear-gradient(#757d85,#7d848b_20%,#c9ccd0_32%,#59626b_33%,#22303f_60%,#22303c)] text-black shadow-[inset_0_0_0_1px_#c8d0d6]"
  >
    <div className="m-px flex h-[26px] shrink-0 items-center rounded-t bg-[linear-gradient(100deg,#757d85,#757b82_20%,#22303f_42%,#22303f_62%,#757b84_80%,#858b91)] pl-1.5">
      <span className="grid size-4 place-items-center bg-[#f3d9d4]">
        <svg viewBox="0 0 16 16" className="size-4"><path d="M6 1h4l5 13h-4l-1-3H6l-1 3H1zM8 4 6.500 8.500h3z" fill="#c0272d" /></svg>
      </span>
      <span className="pl-[5px] text-xs [text-shadow:0_0_6px_#ccc,0_0_8px_#bbb]">外部参照绑定</span>
      <button aria-label="关闭" className="mr-1 ml-auto flex h-[18px] w-[48px] items-center justify-center self-start rounded-b border border-t-0 border-[#e3c3bd] bg-linear-to-b from-[#d98d80] via-[#b93b25] via-50% to-[#cf6a50]">
        <svg viewBox="0 0 12 12" className="size-[11px]"><path d="M1 1h3l2 2.500L8 1h3L8 6l3 5H8L6 8.500 4 11H1l3-5z" fill="#fff" stroke="#5b4a50" /></svg>
      </button>
    </div>
    <div className="mx-[6px] mb-[6px] flex flex-1 flex-col border border-[#12181f] bg-[#f0f0f0] px-[5px] outline outline-[#a9b1b8]">
      <div className="flex justify-between pt-[3px]">
        <GroupBox title="外部参照">
          <li className="flex h-[20px] items-center gap-1 pl-1">
            <svg viewBox="0 0 18 16" className="h-4 w-[18px]">
              <path d="M.5 2.500h11l4 4v8H.500z" fill="#fff" stroke="#777" />
              <path d="M3.500 6V1q1.500-2 2.500 0v5" fill="none" stroke="#000" />
              <path d="m13.500 7 4.500 9H9z" fill="#ffe600" stroke="#e0201a" />
              <path d="M13.500 10v3M13.500 14v1" stroke="#000" />
            </svg>
            <span className="h-[18px] bg-[#3399ff] pr-0.5 pl-0.5 leading-[18px] text-white">没有可绑定的符号。</span>
          </li>
        </GroupBox>
        <div className="flex flex-col gap-[15px] pt-[31px] font-['Liberation_Mono','Noto_Sans_CJK_SC',monospace] text-[11px] text-[#838383]">
          <button disabled className="h-[21px] w-[74px] rounded-[3px] border border-[#adb2b5] bg-[#f4f4f4] whitespace-nowrap">{'添加(A) ->'}</button>
          <button disabled className="h-[21px] w-[74px] rounded-[3px] border border-[#adb2b5] bg-[#f4f4f4] whitespace-nowrap">{'<- 删除(R)'}</button>
        </div>
        <GroupBox title="绑定定义" />
      </div>
      <div className="flex justify-end gap-2 pt-[9px] pr-px text-xs">
        <button className="h-[19px] w-[73px] rounded-[3px] border border-[#3c7fb1] bg-linear-to-b from-[#eaf3f8] via-[#dcebf4] to-[#b9d6e6] leading-4 shadow-[inset_0_0_0_1px_#46d0f7]">确定</button>
        <button className="h-[19px] w-[73px] rounded-[3px] border border-[#707070] bg-linear-to-b from-[#f2f2f2] via-[#e6e6e6] to-[#cfcfcf] leading-4">取消</button>
      </div>
    </div>
  </div>
);

/* ---------- bottom bar ---------- */
const LayoutTab = ({ label, active }: { label: string; active?: boolean }) => (
  <button className={clsx('relative -mr-[5px] flex h-[18px] w-[58px] items-center justify-center text-xs', active ? 'z-10 font-bold text-white' : 'text-[#bdbdbd]')}>
    <svg viewBox="0 0 58 18" className="absolute inset-0 h-[18px] w-[58px]">
      <path d="M0 0q6 1 8 9 3 9 9 9h24q6 0 9-9 2-8 8-9z" fill={active ? '#747474' : '#535353'} stroke={active ? '#858585' : '#606060'} strokeWidth=".5" />
    </svg>
    <span className="relative">{label}</span>
  </button>
);

const Cell = ({ children, className }: { children: ReactNode; className: string }) => (
  <div className={clsx('flex h-full items-center border border-[#7d7d7d] bg-[#505050] text-[#c8c8c8]', className)}>{children}</div>
);

const StatusBar = () => (
  <footer className="flex h-7 border-t border-[#5f5f5f] bg-[#383838]">
    <div className="flex items-start pl-1">
      <LayoutTab label="模型" active />
      <LayoutTab label="布局1" />
      <LayoutTab label="布局2" />
      <button aria-label="新建布局" className="ml-2 flex h-4 w-[22px] items-center justify-center rounded-tl-xl rounded-br-xl bg-[#555]">
        <svg viewBox="0 0 8 8" className="size-2" stroke="#ccc" strokeWidth="2"><path d="M0 4h8M4 0v8" /></svg>
      </button>
    </div>
    <div className="ml-auto flex gap-px pr-px">
      <Cell className="w-[152px] justify-center text-xs whitespace-nowrap text-white">18.4496, 15.2269, 0.0000</Cell>
      <Cell className="w-[28px] justify-center text-xs text-white">模型</Cell>
      <Cell className="w-[65px] gap-2 pl-[5px]">
        <span className="text-[#1f8bff]"><Ic><path d="M2.500 1v14M5.500 1v14M8.500 1v14M11.500 1v14M14 1v14M1 4.500h14M1 8.500h14M1 12.500h14" /></Ic></span>
        <Ic><path d="M1 1.500h15M1 4.500h15M1 7.500h15M1 10.500h15M1 13.500h15" strokeDasharray="1 2" /></Ic>
        <BigCaret />
      </Cell>
      <Cell className="w-[103px] gap-[7px] pl-1.5">
        <Ic><path d="M1.500 1v13.500H14M1.500 10.500h4v4" strokeWidth="1.300" /></Ic>
        <span className="text-[#1f8bff]"><Ic><circle cx="7.500" cy="8" r="6" strokeWidth="1.800" /><path d="M7 8h9M8 8l4-4M12 5v6" strokeWidth="1.500" /></Ic></span>
        <BigCaret />
        <Ic><path d="m0 1 16 14M8.500 0v16" strokeWidth="1.500" /></Ic>
        <BigCaret />
      </Cell>
      <Cell className="w-[64px] gap-[7px] pl-1">
        <span className="text-[#1f8bff]"><Ic><path d="M15 1 1 14.500h15" strokeWidth="1.600" /><circle cx="8" cy="8" r="2" fill="currentColor" /></Ic></span>
        <span className="text-[#1f8bff]"><Ic><path d="M2.500 2.500h12v12h-12z" strokeWidth="1.500" /><path d="M1 1h4v4H1z" fill="#1be51b" stroke="#063" /></Ic></span>
        <BigCaret />
      </Cell>
      <Cell className="w-[111px] gap-2 pl-1">
        <span className="text-[#1f8bff]"><Ic><path d="M6 2h3l1 7 5 5v1l-6-3-2 3-2-3-4 3v-1l4-5z" fill="currentColor" stroke="none" /><circle cx="12" cy="4" r="2.500" fill="#505050" strokeWidth="1.500" /></Ic></span>
        <Ic><path d="M6 1h2l1 8 5 5v1l-5-3-2 3-2-3-4 3v-1l4-5z" fill="currentColor" stroke="none" /><path d="m13 1-3 4h4l-3 4" /></Ic>
        <Ic><path d="M7 0h2l1 9 5 5v1l-5-3-2 3-2-3-5 3v-1l5-5z" fill="currentColor" stroke="none" /></Ic>
        <button className="flex items-center gap-1.5 text-xs text-white">1:1<BigCaret /></button>
      </Cell>
      <Cell className="w-[40px] gap-2.5 pl-1">
        <Ic><circle cx="8" cy="8" r="3.500" strokeWidth="3" /><circle cx="8" cy="8" r="5.500" strokeWidth="2" strokeDasharray="2.300 2.020" /></Ic>
        <BigCaret />
      </Cell>
      <Cell className="w-[25px] justify-center"><Ic><path d="M8 1v14M1 8h14" strokeWidth="1.600" /></Ic></Cell>
      <Cell className="w-[26px] justify-center"><Ic><path d="M2 1h6v6H2zM6 10l3.500 5h-7z" strokeWidth="1.200" /><circle cx="12.500" cy="7" r="2.700" strokeWidth="1.200" /></Ic></Cell>
      <Cell className="w-[26px] justify-center"><Ic><circle cx="8" cy="8" r="7" fill="#0a5fa8" stroke="#1f8bff" strokeWidth="1.500" /><path d="m6 10 6-3" stroke="#2f2f2f" strokeWidth="1.500" /></Ic></Cell>
      <Cell className="w-[50px] justify-between px-1">
        <Ic><path d="M.5 2.500h15v11H.500zM3 11l3-3M3 8.500V11h2.500M13 5l-3 3M13 7.500V5h-2.500" strokeWidth="1.300" /></Ic>
        <Ic><path d="M1 2.500h15M1 8h15M1 13.500h15" strokeWidth="1.800" /></Ic>
      </Cell>
    </div>
  </footer>
);

export default function App() {
  return (
    <div className="relative flex h-screen flex-col overflow-hidden bg-[#383838] font-['Noto_Sans','Noto_Sans_CJK_SC',sans-serif]">
      <header className="relative">
        <TitleBar />
        <MenuBar />
        <button aria-label="应用程序菜单" className="absolute top-0 left-0 flex h-[41px] w-[41px] items-center border border-black bg-linear-to-b from-[#8c8c8c] to-[#5d5d5d] pl-1 shadow-[inset_0_0_0_1px_#aaa]">
          <svg viewBox="0 0 24 28" className="-mt-2 h-7 w-6">
            <path d="M8 1h8l7 25h-7l-2-6H8l-1 6H0z" fill="#c3262c" />
            <path d="M11 7 8 15l9-1-5-7z" fill="#777" />
            <path d="M8 1 5 16 0 26h5L13 2z" fill="#e4575a" />
            <path d="m8 20 8-6 7 12h-5l-4-6z" fill="#971a20" />
          </svg>
          <BigCaret className="ml-0.5 text-[#2b2f36]" />
        </button>
        <RibbonTabs />
        <Ribbon />
        <FileTabs />
      </header>
      <main className="flex min-h-0 flex-1">
        <div className="relative flex-1 bg-[#212830]">
          <Grid />
          <p className="relative px-[3px] pt-1 text-xs leading-[18px] text-white">[−][俯视][二维线框]</p>
          <ViewCube />
          <NavBar />
          <UcsIcon />
          <CommandLine />
        </div>
        <div className="relative w-2 border-r-2 border-[#1fd4f0] bg-[#bcd0ea]">
          <div className="absolute top-[51px] -left-[3px] flex h-[59px] w-[9px] flex-col justify-end gap-px rounded border border-[#cfd4d8] bg-linear-to-r from-black to-[#555d66] px-px pb-0.5">
            <span className="h-px bg-[#3ddc55]" />
            <span className="h-px bg-[#3ddc55]" />
            <span className="h-px bg-[#3ddc55]" />
            <span className="h-px bg-[#3ddc55]" />
          </div>
        </div>
      </main>
      <StatusBar />
      <div className="h-0.5 shrink-0 border-t border-black bg-[#8d9297]" />
      {/* modal dialog inside its highlight frame */}
      <div className="absolute inset-0 grid place-items-center pt-5 pl-2.5">
        <div className="rounded-[3px] border-3 border-[#ff1f14] pt-5 pr-[43px] pb-10 pl-9">
          <XBindDialog />
        </div>
      </div>
      <span className="pointer-events-none absolute right-2 bottom-[21px] text-[36px] leading-[36px] font-bold text-[#868686]">最需教育</span>
    </div>
  );
}
